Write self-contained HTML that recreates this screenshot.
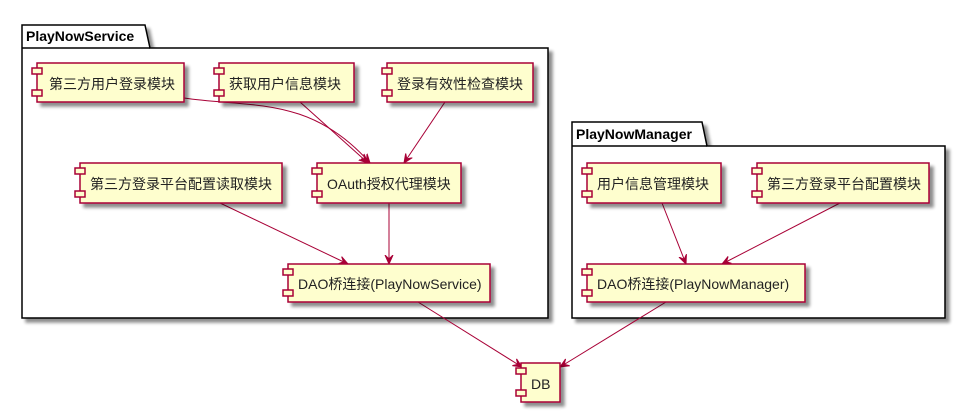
<!DOCTYPE html>
<html><head><meta charset="utf-8"><style>body{margin:0;background:#fff}svg{display:block}</style></head><body>
<svg width="979" height="413" viewBox="0 0 979 413" xmlns="http://www.w3.org/2000/svg" font-family="'Liberation Sans','Noto Sans CJK SC',sans-serif">
<defs>
<filter id="sh" x="-10%" y="-10%" width="130%" height="140%"><feGaussianBlur in="SourceAlpha" stdDeviation="1.6"/><feOffset dx="4" dy="4"/><feComponentTransfer><feFuncA type="linear" slope="0.45"/></feComponentTransfer><feMerge><feMergeNode/><feMergeNode in="SourceGraphic"/></feMerge></filter>
<marker id="ar" markerWidth="10" markerHeight="10" refX="9" refY="5" orient="auto" markerUnits="userSpaceOnUse"><path d="M0,1 L9,5 L0,9 L4,5 Z" fill="#A80036" stroke="#A80036"/></marker>
</defs>
<g filter="url(#sh)" fill="#fff" stroke="#000" stroke-width="1.5">
<path d="M22,48 L22,25 L145,25 L150,48 L548,48 L548,318 L22,318 Z"/>
<path d="M572,146 L572,122 L702,122 L707,146 L945,146 L945,318 L572,318 Z"/>
</g>
<g stroke="#000" stroke-width="1.5"><line x1="22" y1="48" x2="150" y2="48"/><line x1="572" y1="146" x2="707" y2="146"/></g>
<g font-weight="bold" font-size="14" fill="#000"><text x="26" y="41">PlayNowService</text><text x="576" y="139">PlayNowManager</text></g>
<g fill="none" stroke="#A80036" stroke-width="1">
<path d="M184,98 C250,108 310,95 370,163" marker-end="url(#ar)"/>
<path d="M300,102 L368,163" marker-end="url(#ar)"/>
<path d="M445,102 L404,163" marker-end="url(#ar)"/>
<path d="M220,203 L348,264" marker-end="url(#ar)"/>
<path d="M389,203 L389,264" marker-end="url(#ar)"/>
<path d="M418,302 L522,367" marker-end="url(#ar)"/>
<path d="M662,203 L686,264" marker-end="url(#ar)"/>
<path d="M840,203 L722,264" marker-end="url(#ar)"/>
<path d="M666,302 L560,367" marker-end="url(#ar)"/>
</g>
<g fill="#FEFECE" stroke="#A80036" stroke-width="1.5">
<g filter="url(#sh)">
<rect x="37" y="63" width="147" height="39"/><rect x="219" y="63" width="135" height="39"/><rect x="387" y="63" width="146" height="39"/>
<rect x="80" y="163" width="202" height="40"/><rect x="317" y="163" width="144" height="40"/>
<rect x="288" y="264" width="202" height="38"/><rect x="521" y="363" width="39" height="39"/>
<rect x="587" y="163" width="134" height="40"/><rect x="757" y="163" width="172" height="40"/><rect x="587" y="264" width="218" height="38"/>
</g>
<g>
<rect x="32" y="68" width="10" height="6"/><rect x="32" y="90" width="10" height="6"/>
<rect x="214" y="68" width="10" height="6"/><rect x="214" y="90" width="10" height="6"/>
<rect x="382" y="68" width="10" height="6"/><rect x="382" y="90" width="10" height="6"/>
<rect x="75" y="168" width="10" height="6"/><rect x="75" y="191" width="10" height="6"/>
<rect x="312" y="168" width="10" height="6"/><rect x="312" y="191" width="10" height="6"/>
<rect x="283" y="269" width="10" height="6"/><rect x="283" y="290" width="10" height="6"/>
<rect x="516" y="368" width="10" height="6"/><rect x="516" y="390" width="10" height="6"/>
<rect x="582" y="168" width="10" height="6"/><rect x="582" y="191" width="10" height="6"/>
<rect x="752" y="168" width="10" height="6"/><rect x="752" y="191" width="10" height="6"/>
<rect x="582" y="269" width="10" height="6"/><rect x="582" y="290" width="10" height="6"/>
</g>
</g>
<g font-size="14" fill="#222">
<text x="49" y="89">第三方用户登录模块</text>
<text x="229" y="89">获取用户信息模块</text>
<text x="397" y="89">登录有效性检查模块</text>
<text x="90" y="189">第三方登录平台配置读取模块</text>
<text x="327" y="189">OAuth授权代理模块</text>
<text x="298" y="289">DAO桥连接(PlayNowService)</text>
<text x="531" y="389">DB</text>
<text x="597" y="189">用户信息管理模块</text>
<text x="767" y="189">第三方登录平台配置模块</text>
<text x="597" y="289">DAO桥连接(PlayNowManager)</text>
</g>
</svg>
</body></html>
